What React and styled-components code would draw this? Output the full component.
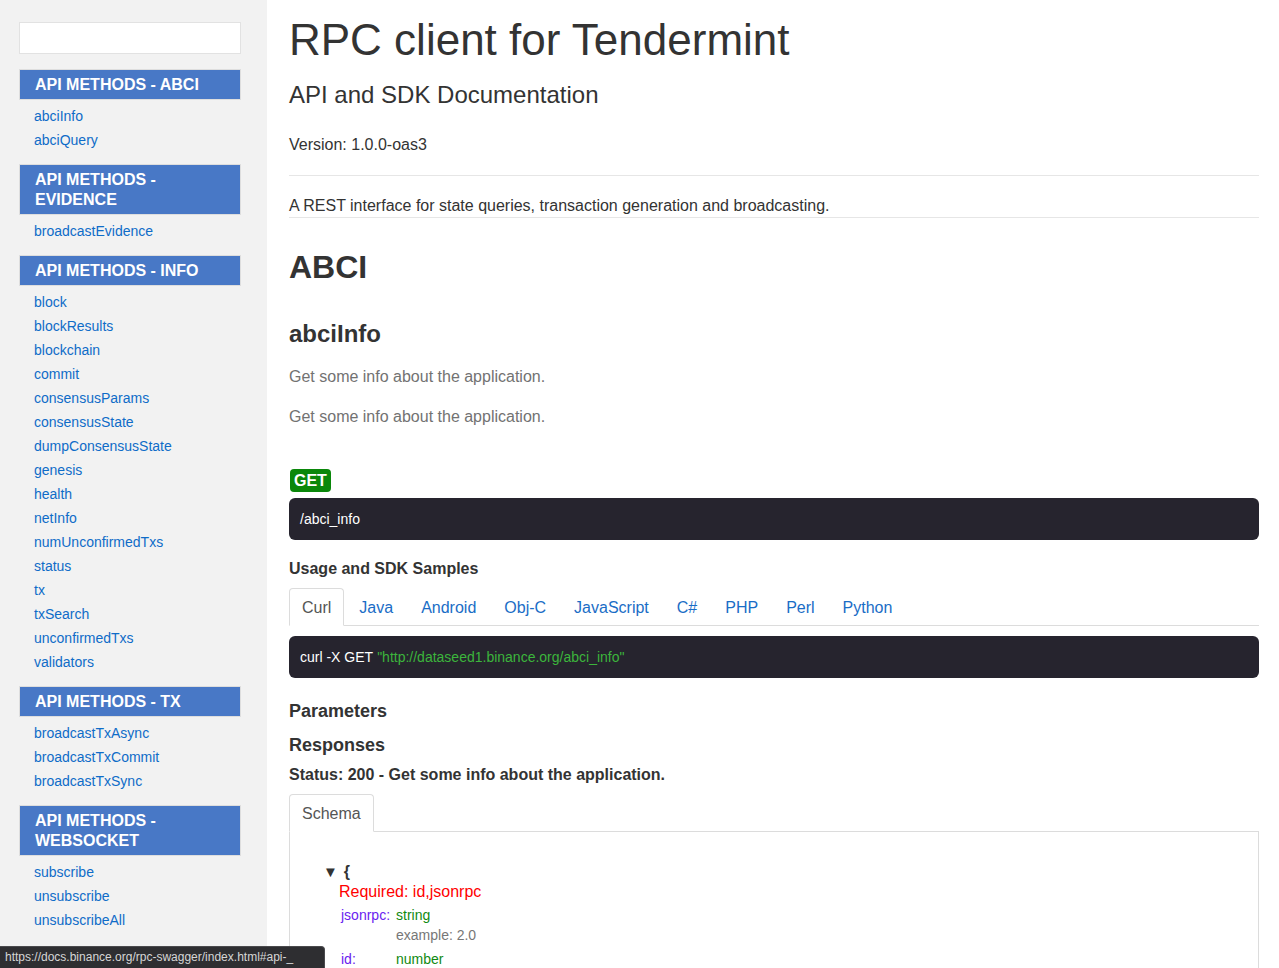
import React from "react";
import styled, { createGlobalStyle } from "styled-components";

const Global = createGlobalStyle`
  html, body { margin: 0; padding: 0; height: 100%; overflow: hidden; }
  body {
    font-family: "Liberation Sans", Arial, Helvetica, sans-serif;
    color: #333;
    background: #fff;
  }
  * { box-sizing: border-box; }
`;

const Page = styled.div`
  display: flex;
  height: 100vh;
  overflow: hidden;
`;

const Sidebar = styled.nav`
  flex: 0 0 267px;
  background: #f2f2f2;
  padding: 22px 26px 0 19px;
  height: 100vh;
  overflow: hidden;
`;

const Search = styled.input`
  display: block;
  width: 100%;
  height: 32px;
  border: 1px solid #e2e2e2;
  background: #fff;
  outline: none;
  margin: 0 0 15px;
`;

const NavHeader = styled.div`
  background: #4878c6;
  border: 1px solid #dedede;
  color: #fff;
  font-weight: bold;
  font-size: 16px;
  line-height: 20px;
  padding: 5px 15px 4px;
  text-transform: uppercase;
`;

const NavList = styled.ul`
  list-style: none;
  margin: 4px 0 12px;
  padding: 0 0 0 15px;
`;

const NavLink = styled.a`
  display: block;
  font-size: 14px;
  line-height: 24px;
  color: #0f6cc8;
  text-decoration: none;
`;

const Main = styled.main`
  flex: 1;
  padding: 16px 20px 0 22px;
  height: 100vh;
  overflow: hidden;
`;

const Title = styled.h1`
  margin: 0;
  font-weight: normal;
  font-size: 44px;
  line-height: 48px;
  color: #333;
`;

const Subtitle = styled.h2`
  margin: 16px 0 0;
  font-weight: normal;
  font-size: 24px;
  line-height: 30px;
`;

const Para = styled.p`
  margin: ${(p) => p.$mt || 0}px 0 0;
  font-size: 16px;
  line-height: 22px;
  color: ${(p) => (p.$muted ? "#727272" : "#333")};
`;

const Rule = styled.hr`
  margin: 19px 0 0;
  border: 0;
  border-top: 1px solid #e6e6e6;
  height: 0;
`;

const Desc = styled.p`
  margin: 19px 0 0;
  font-size: 16px;
  line-height: 22px;
  border-bottom: 1px solid #e6e6e6;
`;

const SectionTitle = styled.h1`
  margin: 31px 0 0;
  font-size: 32px;
  line-height: 36px;
  font-weight: bold;
`;

const MethodTitle = styled.h2`
  margin: 34px 0 0;
  font-size: 24px;
  line-height: 30px;
  font-weight: bold;
`;

const Badge = styled.span`
  display: inline-block;
  margin: 41px 0 0 1px;
  background: #0a870a;
  color: #fff;
  font-weight: bold;
  font-size: 16px;
  line-height: 23px;
  height: 23px;
  padding: 0 4px;
  border-radius: 4px;
`;

const CodeBar = styled.div`
  margin-top: ${(p) => p.$mt || 0}px;
  background: #26242e;
  border-radius: 6px;
  height: 42px;
  display: flex;
  align-items: center;
  padding: 0 11px;
  font-size: 14px;
  color: #fff;
`;

const Str = styled.span`
  color: #3cb53c;
  margin-left: 4px;
`;

const SubHead = styled.h4`
  margin: ${(p) => p.$mt || 0}px 0 0;
  font-weight: bold;
  font-size: ${(p) => p.$size || 16}px;
  line-height: ${(p) => (p.$size === 18 ? 24 : 22)}px;
`;

const Tabs = styled.ul`
  list-style: none;
  display: flex;
  margin: ${(p) => p.$mt || 0}px 0 0;
  padding: 0;
  border-bottom: 1px solid #dcdcdc;
`;

const Tab = styled.li`
  margin: 0 2px -1px 0;
  padding: 0 12px;
  height: 38px;
  line-height: 37px;
  font-size: 16px;
  color: ${(p) => (p.$active ? "#555" : "#1a6dc6")};
  background: ${(p) => (p.$active ? "#fff" : "transparent")};
  border: 1px solid ${(p) => (p.$active ? "#dcdcdc" : "transparent")};
  border-bottom-color: ${(p) => (p.$active ? "#fff" : "transparent")};
  border-radius: 4px 4px 0 0;
`;

const SchemaPanel = styled.div`
  border: 1px solid #dcdcdc;
  border-top: 0;
  padding: 30px 0 40px 33px;
  min-height: 200px;
`;

const TreeLine = styled.div`
  font-size: 16px;
  line-height: 20px;
  padding-left: ${(p) => p.$indent || 0}px;
  color: ${(p) => p.$color || "#333"};
`;

const Caret = styled.span`
  font-size: 15px;
  margin-right: 6px;
`;

const Prop = styled.div`
  display: grid;
  grid-template-columns: 55px 1fr;
  padding-left: 18px;
  margin-top: ${(p) => p.$mt || 0}px;
  font-size: 14px;
  line-height: 20px;
`;

const PropName = styled.span`
  color: #6a1cf0;
`;

const PropType = styled.span`
  color: ${(p) => (p.$muted ? "#777" : "#118a11")};
`;

const StatusBar = styled.div`
  position: fixed;
  left: 0;
  bottom: 0;
  width: 325px;
  height: 22px;
  background: #2e2e31;
  border: 1px solid #4a4a4d;
  border-left: 0;
  border-bottom: 0;
  border-top-right-radius: 4px;
  color: #d6d6d6;
  font-size: 12px;
  line-height: 21px;
  padding-left: 5px;
  white-space: nowrap;
  overflow: hidden;
`;

const nav = [
  { title: "API Methods - ABCI", items: ["abciInfo", "abciQuery"] },
  { title: "API Methods - Evidence", items: ["broadcastEvidence"] },
  {
    title: "API Methods - Info",
    items: [
      "block",
      "blockResults",
      "blockchain",
      "commit",
      "consensusParams",
      "consensusState",
      "dumpConsensusState",
      "genesis",
      "health",
      "netInfo",
      "numUnconfirmedTxs",
      "status",
      "tx",
      "txSearch",
      "unconfirmedTxs",
      "validators",
    ],
  },
  {
    title: "API Methods - Tx",
    items: ["broadcastTxAsync", "broadcastTxCommit", "broadcastTxSync"],
  },
  {
    title: "API Methods - Websocket",
    items: ["subscribe", "unsubscribe", "unsubscribeAll"],
  },
];

const langs = ["Curl", "Java", "Android", "Obj-C", "JavaScript", "C#", "PHP", "Perl", "Python"];

export default function App() {
  return (
    <>
      <Global />
      <Page>
        <Sidebar>
          <Search type="text" />
          {nav.map((s) => (
            <div key={s.title}>
              <NavHeader>{s.title}</NavHeader>
              <NavList>
                {s.items.map((i) => (
                  <li key={i}>
                    <NavLink href="#">{i}</NavLink>
                  </li>
                ))}
              </NavList>
            </div>
          ))}
        </Sidebar>
        <Main>
          <Title>RPC client for Tendermint</Title>
          <Subtitle>API and SDK Documentation</Subtitle>
          <Para $mt={24}>Version: 1.0.0-oas3</Para>
          <Rule />
          <Desc>A REST interface for state queries, transaction generation and broadcasting.</Desc>
          <SectionTitle>ABCI</SectionTitle>
          <MethodTitle>abciInfo</MethodTitle>
          <Para $mt={17} $muted>Get some info about the application.</Para>
          <Para $mt={18} $muted>Get some info about the application.</Para>
          <Badge>GET</Badge>
          <CodeBar $mt={6}>/abci_info</CodeBar>
          <SubHead $mt={18}>Usage and SDK Samples</SubHead>
          <Tabs $mt={8}>
            {langs.map((l, i) => (
              <Tab key={l} $active={i === 0}>{l}</Tab>
            ))}
          </Tabs>
          <CodeBar $mt={10}>
            curl -X GET<Str>"http://dataseed1.binance.org/abci_info"</Str>
          </CodeBar>
          <SubHead $mt={21} $size={18}>Parameters</SubHead>
          <SubHead $mt={10} $size={18}>Responses</SubHead>
          <SubHead $mt={7}>Status: 200 - Get some info about the application.</SubHead>
          <Tabs $mt={8}>
            <Tab $active>Schema</Tab>
          </Tabs>
          <SchemaPanel>
            <TreeLine>
              <Caret>▼</Caret>
              <b>{"{"}</b>
            </TreeLine>
            <TreeLine $indent={16} $color="#f00">Required: id,jsonrpc</TreeLine>
            <Prop $mt={3}>
              <PropName>jsonrpc:</PropName>
              <PropType>string</PropType>
              <span />
              <PropType $muted>example: 2.0</PropType>
            </Prop>
            <Prop $mt={4}>
              <PropName>id:</PropName>
              <PropType>number</PropType>
            </Prop>
          </SchemaPanel>
        </Main>
      </Page>
      <StatusBar>https://docs.binance.org/rpc-swagger/index.html#api-_</StatusBar>
    </>
  );
}
